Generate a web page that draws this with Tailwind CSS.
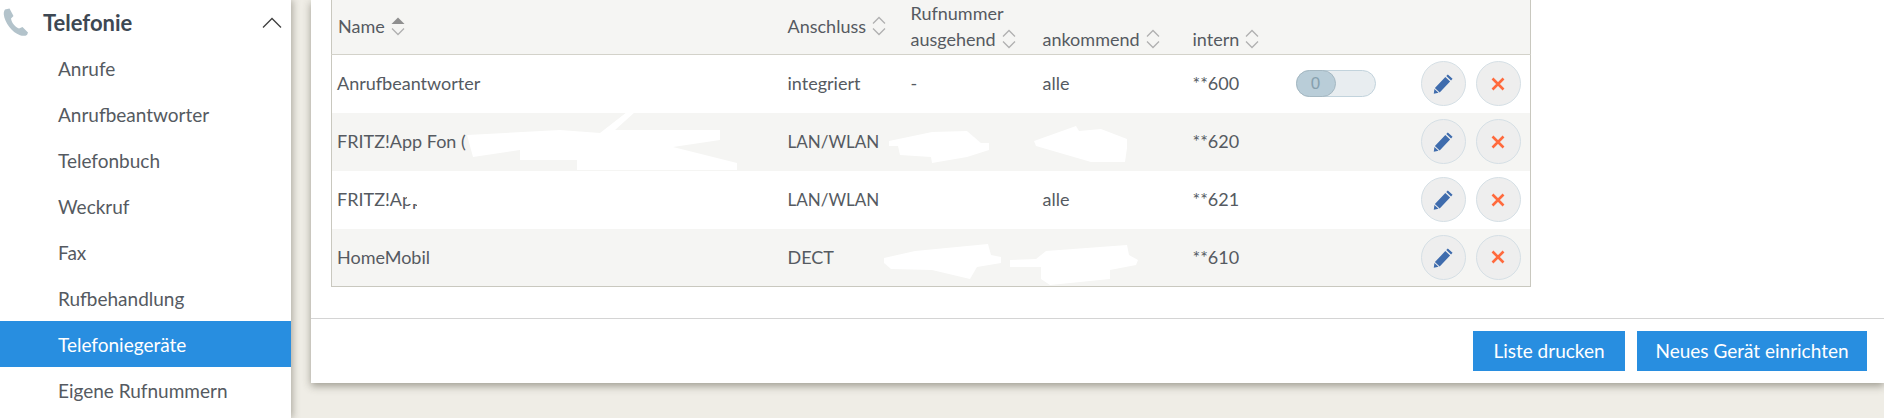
<!DOCTYPE html>
<html lang="de">
<head>
  <meta charset="UTF-8" />
  <title>Telefoniegeräte</title>
  <script src="https://cdn.jsdelivr.net/npm/@tailwindcss/browser@4"></script>
</head>
<body class="bg-[#efede6] font-['Lato','Noto_Sans',sans-serif] text-[#555a61] text-[18px] overflow-hidden">
  <svg class="hidden">
    <symbol id="sort" viewBox="0 0 14 20"><path d="M1 7.500 7 1.500l6 6M1 12.500l6 6 6-6" fill="none" stroke="#b0b0b0" stroke-width="1.300" /></symbol>
    <symbol id="sort-up" viewBox="0 0 14 20"><path d="M0.500 8 7 1.500 13.500 8z" fill="#8f8f8f" /><path d="M1 12.500l6 6 6-6" fill="none" stroke="#b0b0b0" stroke-width="1.300" /></symbol>
    <symbol id="pencil" viewBox="0 0 22 22"><path d="M15.500 1.500 20.500 6l-1.600 1.800-5-4.600zM12.900 4.300l5 4.600L7 20.300l-5-4.600zM1.500 16.800l4.300 4-5 1z" fill="#3f6cad" /></symbol>
    <symbol id="cross" viewBox="0 0 14 14"><path d="M1.500 1.500l11 11M12.500 1.500l-11 11" fill="none" stroke="#ff6a3d" stroke-width="2.600" /></symbol>
  </svg>

  <div class="flex h-[418px] overflow-hidden">
    <!-- Sidebar -->
    <nav class="w-[291px] shrink-0 bg-white h-full text-[19px] shadow-[2px_0_7px_rgba(60,55,40,0.35)] z-10">
      <div class="h-[45px] flex items-center">
        <svg class="ml-[3px] w-[26px] h-[28px] -mt-[2px]" viewBox="0 0 26 28"><path d="M2 1.500 6.500 0.500l4 7.500-2.500 2.500c.6 4 3.500 8 8 10l3.500-1.500 5.500 5.500-1 2.500c-1.500 1-4.500 1.200-7 .2C9 24.500 1.500 14 .8 6.500.7 4.500 1 3 2 1.500z" fill="#b3c3cb" /></svg>
        <span class="ml-[14px] text-[22px] font-bold text-[#3d4853] leading-none">Telefonie</span>
        <svg class="ml-auto mr-[9px] w-[20px] h-[12px]" viewBox="0 0 20 12"><path d="M1 10.500 10 1.500l9 9" fill="none" stroke="#3f3f3f" stroke-width="1.300" /></svg>
      </div>
      <ul>
        <li class="h-[46px] pl-[58px] pt-[2px] flex items-center">Anrufe</li>
        <li class="h-[46px] pl-[58px] pt-[2px] flex items-center">Anrufbeantworter</li>
        <li class="h-[46px] pl-[58px] pt-[2px] flex items-center">Telefonbuch</li>
        <li class="h-[46px] pl-[58px] pt-[2px] flex items-center">Weckruf</li>
        <li class="h-[46px] pl-[58px] pt-[2px] flex items-center">Fax</li>
        <li class="h-[46px] pl-[58px] pt-[2px] flex items-center">Rufbehandlung</li>
        <li class="h-[46px] pl-[58px] pt-[2px] flex items-center bg-[#288ee0] text-white">Telefoniegeräte</li>
        <li class="h-[46px] pl-[58px] pt-[2px] flex items-center">Eigene Rufnummern</li>
      </ul>
    </nav>

    <!-- Content -->
    <main class="flex-1 pl-[20px]">
      <div class="relative bg-white h-[383px] shadow-[0_3px_8px_rgba(60,55,40,0.45)]">
        <div class="h-[318px] pl-[20px]">
          <table class="table-fixed w-[1200px] border-x border-b border-[#c9c8bf] border-collapse text-left">
            <colgroup>
              <col class="w-[450px]" /><col class="w-[123px]" /><col class="w-[132px]" /><col class="w-[150px]" /><col class="w-[103px]" /><col class="w-[124px]" /><col />
            </colgroup>
            <thead class="bg-[#f5f5f3] border-b border-[#d3d2ca]">
              <tr class="h-[54px] font-normal">
                <th class="pl-[6px] pb-[2px] font-normal align-middle"><span class="inline-flex items-center gap-[6px]">Name <svg class="w-[14px] h-[20px]"><use href="#sort-up" /></svg></span></th>
                <th class="pl-[6px] pb-[2px] font-normal align-middle"><span class="inline-flex items-center gap-[6px]">Anschluss <svg class="w-[14px] h-[20px]"><use href="#sort" /></svg></span></th>
                <th class="pl-[6px] pb-[2px] font-normal align-bottom leading-[26px]">Rufnummer<br /><span class="inline-flex items-center gap-[6px]">ausgehend <svg class="w-[14px] h-[20px]"><use href="#sort" /></svg></span></th>
                <th class="pl-[6px] pb-[2px] font-normal align-bottom leading-[26px]"><span class="inline-flex items-center gap-[6px]">ankommend <svg class="w-[14px] h-[20px]"><use href="#sort" /></svg></span></th>
                <th class="pl-[6px] pb-[2px] font-normal align-bottom leading-[26px]"><span class="inline-flex items-center gap-[6px]">intern <svg class="w-[14px] h-[20px]"><use href="#sort" /></svg></span></th>
                <th></th>
                <th></th>
              </tr>
            </thead>
            <tbody>
              <tr class="h-[58px]">
                <td class="pl-[5px]">Anrufbeantworter</td>
                <td class="pl-[6px]">integriert</td>
                <td class="pl-[6px]">-</td>
                <td class="pl-[6px]">alle</td>
                <td class="pl-[6px]">**600</td>
                <td class="pl-[6px]">
                  <div class="w-[80px] h-[27px] rounded-full bg-[#e8edf0] border border-[#c2d3dc]">
                    <div class="w-[40px] h-[27px] -m-px rounded-full bg-[#b9cdd8] border border-[#a5b8c2] flex items-center justify-center font-['Liberation_Sans',sans-serif] text-[17px] text-[#86a0ae]">0</div>
                  </div>
                </td>
                <td>
                  <div class="flex gap-[10px] pl-[7px]">
                    <button class="w-[45px] h-[45px] rounded-full bg-[#eeeeee] border border-[#d5dfe5] flex items-center justify-center"><svg class="w-[21px] h-[21px]"><use href="#pencil" /></svg></button>
                    <button class="w-[45px] h-[45px] rounded-full bg-[#eeeeee] border border-[#d5dfe5] flex items-center justify-center"><svg class="w-[14px] h-[14px]"><use href="#cross" /></svg></button>
                  </div>
                </td>
              </tr>
              <tr class="h-[58px] bg-[#f5f5f3]">
                <td class="pl-[5px]">FRITZ!App Fon (</td>
                <td class="pl-[6px] text-[17px]">LAN/WLAN</td>
                <td></td>
                <td></td>
                <td class="pl-[6px]">**620</td>
                <td></td>
                <td>
                  <div class="flex gap-[10px] pl-[7px]">
                    <button class="w-[45px] h-[45px] rounded-full bg-[#eeeeee] border border-[#d5dfe5] flex items-center justify-center"><svg class="w-[21px] h-[21px]"><use href="#pencil" /></svg></button>
                    <button class="w-[45px] h-[45px] rounded-full bg-[#eeeeee] border border-[#d5dfe5] flex items-center justify-center"><svg class="w-[14px] h-[14px]"><use href="#cross" /></svg></button>
                  </div>
                </td>
              </tr>
              <tr class="h-[58px]">
                <td class="pl-[5px]">FRITZ!App</td>
                <td class="pl-[6px] text-[17px]">LAN/WLAN</td>
                <td></td>
                <td class="pl-[6px]">alle</td>
                <td class="pl-[6px]">**621</td>
                <td></td>
                <td>
                  <div class="flex gap-[10px] pl-[7px]">
                    <button class="w-[45px] h-[45px] rounded-full bg-[#eeeeee] border border-[#d5dfe5] flex items-center justify-center"><svg class="w-[21px] h-[21px]"><use href="#pencil" /></svg></button>
                    <button class="w-[45px] h-[45px] rounded-full bg-[#eeeeee] border border-[#d5dfe5] flex items-center justify-center"><svg class="w-[14px] h-[14px]"><use href="#cross" /></svg></button>
                  </div>
                </td>
              </tr>
              <tr class="h-[58px] bg-[#f5f5f3]">
                <td class="pl-[5px]">HomeMobil</td>
                <td class="pl-[6px]">DECT</td>
                <td></td>
                <td></td>
                <td class="pl-[6px]">**610</td>
                <td></td>
                <td>
                  <div class="flex gap-[10px] pl-[7px]">
                    <button class="w-[45px] h-[45px] rounded-full bg-[#eeeeee] border border-[#d5dfe5] flex items-center justify-center"><svg class="w-[21px] h-[21px]"><use href="#pencil" /></svg></button>
                    <button class="w-[45px] h-[45px] rounded-full bg-[#eeeeee] border border-[#d5dfe5] flex items-center justify-center"><svg class="w-[14px] h-[14px]"><use href="#cross" /></svg></button>
                  </div>
                </td>
              </tr>
            </tbody>
          </table>
        </div>

        <div class="border-t border-[#d4d4d4] h-[65px] flex justify-end items-start gap-[12px] pt-[12px] pr-[17px] text-[19px]">
          <button class="w-[152px] h-[40px] bg-[#288ee0] text-white">Liste drucken</button>
          <button class="w-[230px] h-[40px] bg-[#288ee0] text-white">Neues Gerät einrichten</button>
        </div>

        <!-- white scribbles over the private numbers, coordinates match the full page -->
        <svg class="absolute left-0 top-0 w-[1573px] h-[300px] pointer-events-none" viewBox="311 0 1573 300" fill="#fff">
          <path d="M467 135 560 130 600 133 627 112 635 112 615 130 720 130 720 140 673 147 737 163 737 170 577 170 577 160 520 160 520 150 473 157z" />
          <path d="M407 180H740V204H428V222H417V204H407z" />
          <path d="M889 141 932 132 967 131 981 143 989 143 989 150 967 157 932 163 931 157 900 155 898 146 889 146z" />
          <path d="M1034 141 1076 126 1079 131 1101 129 1127 139 1127 148 1125 162 1091 162 1036 146z" />
          <path d="M884 258 915 251 988 244 991 255 1001 257 1001 263 977 267 970 279 932 270 891 269 884 263z" />
          <path d="M1010 260 1036 259 1046 251 1127 245 1129 255 1138 260 1136 265 1110 270 1110 279 1050 285 1041 279 1041 267 1010 267z" />
        </svg>
      </div>
    </main>
  </div>
</body>
</html>
